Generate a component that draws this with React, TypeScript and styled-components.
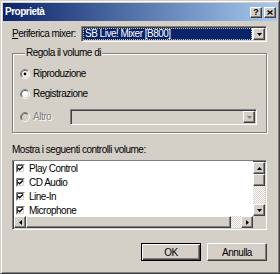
import React from 'react';
import styled, { createGlobalStyle, css } from 'styled-components';

const GlobalStyle = createGlobalStyle`
  html, body {
    margin: 0;
    padding: 0;
    background: #d4d0c8;
  }
  body {
    font-family: "Liberation Sans", Arial, sans-serif;
    font-size: 10px;
    letter-spacing: -0.5px;
    color: #000;
  }
`;

const raised = css`
  border: 1px solid;
  border-color: #fff #404040 #404040 #fff;
  box-shadow: inset -1px -1px #808080, inset 1px 1px #d4d0c8;
`;

const sunken = css`
  border: 1px solid;
  border-color: #808080 #fff #fff #808080;
  box-shadow: inset 1px 1px #404040, inset -1px -1px #d4d0c8;
`;

const dither = css`
  background: repeating-conic-gradient(#d4d0c8 0 25%, #fff 0 50%) 0 0 / 2px 2px;
`;

const Window = styled.div`
  width: 280px;
  height: 274px;
  box-sizing: border-box;
  border: 1px solid;
  border-color: #d4d0c8 #404040 #404040 #d4d0c8;
  box-shadow: inset 1px 1px #fff, inset -1px -1px #808080;
  padding: 2px;
  display: flex;
  flex-direction: column;
  background: #d4d0c8;
`;

const TitleBar = styled.div`
  height: 18px;
  display: flex;
  align-items: center;
  padding: 0 1px 0 2px;
  gap: 2px;
  background: linear-gradient(to right, #0a246a, #a6caf0);
`;

const Title = styled.span`
  flex: 1;
  color: #fff;
  font-weight: bold;
  line-height: 18px;
`;

const TitleButton = styled.div`
  width: 12px;
  height: 11px;
  box-sizing: border-box;
  ${raised}
  background: #d4d0c8;
  display: flex;
  align-items: center;
  justify-content: center;
  font-weight: bold;
  font-size: 9px;
  line-height: 9px;
  letter-spacing: 0;
`;

const Body = styled.div`
  flex: 1;
  display: flex;
  flex-direction: column;
  padding: 5px 10px 9px 9px;
`;

const MixerRow = styled.div`
  display: flex;
  align-items: center;
  height: 16px;
`;

const Label = styled.span<{ $disabled?: boolean }>`
  line-height: 12px;
  white-space: nowrap;
  ${(p) =>
    p.$disabled &&
    css`
      color: #808080;
      text-shadow: 1px 1px #fff;
    `}
`;

const Combo = styled.div<{ $disabled?: boolean }>`
  width: ${(p) => (p.$disabled ? 187 : 186)}px;
  height: 16px;
  margin-left: auto;
  box-sizing: border-box;
  ${sunken}
  padding: 1px;
  display: flex;
  background: ${(p) => (p.$disabled ? '#d4d0c8' : '#fff')};
`;

const ComboValue = styled.div`
  flex: 1;
  margin-right: 1px;
  box-sizing: border-box;
  background: #0a246a;
  color: #fff;
  border: 1px dotted #c8c4bc;
  padding-left: 1px;
  line-height: 10px;
  white-space: nowrap;
`;

const ComboSpacer = styled.div`
  flex: 1;
`;

const SmallButton = styled.div`
  width: 12px;
  height: 12px;
  box-sizing: border-box;
  ${raised}
  background: #d4d0c8;
  display: flex;
  align-items: center;
  justify-content: center;
  flex-shrink: 0;
`;

const Group = styled.fieldset`
  margin: 5px 0 0;
  padding: 8px 9px 7px 7px;
  min-width: 0;
  border: 1px solid #808080;
  box-shadow: inset 1px 1px #fff, 1px 1px #fff;
`;

const Legend = styled.legend`
  margin-left: 5px;
  padding: 0 1px;
  line-height: 12px;
  background: #d4d0c8;
`;

const RadioList = styled.div`
  display: flex;
  flex-direction: column;
  gap: 6px;
`;

const RadioRow = styled.div`
  display: flex;
  align-items: center;
  gap: 3px;
  min-height: 14px;
  &:last-child {
    margin-top: 2px;
  }
`;

const RadioSvg = styled.svg`
  width: 10px;
  height: 10px;
  flex-shrink: 0;
`;

const Caption = styled.div`
  margin-top: 11px;
  line-height: 12px;
`;

const ListBox = styled.div`
  margin-top: 4px;
  height: 70px;
  box-sizing: border-box;
  ${sunken}
  padding: 1px;
  display: grid;
  grid-template-columns: 1fr 12px;
  grid-template-rows: 1fr 12px;
  background: #fff;
`;

const Items = styled.div`
  overflow: hidden;
  background: #fff;
  margin-top: -1px;
`;

const Item = styled.div`
  height: 14px;
  display: flex;
  align-items: center;
  padding-left: 2px;
  gap: 4px;
  white-space: nowrap;
`;

const VScroll = styled.div`
  display: flex;
  flex-direction: column;
`;

const HScroll = styled.div`
  display: flex;
`;

const Thumb = styled.div<{ $flex?: boolean }>`
  ${raised}
  box-sizing: border-box;
  background: #d4d0c8;
  ${(p) => (p.$flex ? 'flex: 1;' : 'height: 12px; flex-shrink: 0;')}
`;

const Track = styled.div<{ $size?: number }>`
  ${dither}
  ${(p) => (p.$size ? `width: ${p.$size}px; flex-shrink: 0;` : 'flex: 1;')}
`;

const Corner = styled.div`
  background: #d4d0c8;
`;

const ButtonRow = styled.div`
  margin-top: 13px;
  display: flex;
  justify-content: flex-end;
  gap: 6px;
`;

const PushButton = styled.div<{ $default?: boolean }>`
  width: 60px;
  height: 18px;
  box-sizing: border-box;
  background: #d4d0c8;
  display: flex;
  align-items: center;
  justify-content: center;
  ${(p) =>
    p.$default
      ? css`
          border: 1px solid #000;
          box-shadow: inset 1px 1px #fff, inset -1px -1px #404040, inset -2px -2px #808080;
        `
      : raised}
`;

function Arrow({ dir, color = '#000' }: { dir: 'up' | 'down' | 'left' | 'right'; color?: string }) {
  const points = {
    up: '0,3 2.5,0 5,3',
    down: '0,0 5,0 2.5,3',
    left: '3,0 3,5 0,2.5',
    right: '0,0 0,5 3,2.5',
  }[dir];
  const vertical = dir === 'up' || dir === 'down';
  return (
    <svg width={vertical ? 5 : 3} height={vertical ? 3 : 5} viewBox={vertical ? '0 0 5 3' : '0 0 3 5'}>
      <polygon points={points} fill={color} />
    </svg>
  );
}

function Radio({ checked, disabled }: { checked?: boolean; disabled?: boolean }) {
  return (
    <RadioSvg viewBox="0 0 12 12">
      <circle cx="6" cy="6" r="4.5" fill={disabled ? '#d4d0c8' : '#fff'} />
      <path d="M2.11 9.89A5.5 5.5 0 0 1 9.89 2.11" stroke="#808080" fill="none" />
      <path d="M9.89 2.11A5.5 5.5 0 0 1 2.11 9.89" stroke="#fff" fill="none" />
      <path d="M2.82 9.18A4.5 4.5 0 0 1 9.18 2.82" stroke="#404040" fill="none" />
      <path d="M9.18 2.82A4.5 4.5 0 0 1 2.82 9.18" stroke="#d4d0c8" fill="none" />
      {checked && <circle cx="6" cy="6" r="1.7" fill="#000" />}
    </RadioSvg>
  );
}

function Check() {
  return (
    <svg width="9" height="9" viewBox="0 0 9 9" style={{ flexShrink: 0 }}>
      <rect x="0" y="0" width="9" height="9" fill="#fff" />
      <path d="M0.5 8.5V0.5H8.5" stroke="#808080" fill="none" />
      <path d="M1.5 7.5V1.5H7.5" stroke="#404040" fill="none" />
      <path d="M1.5 7.5H7.5V1.5" stroke="#d4d0c8" fill="none" />
      <polyline points="2.2,4.2 3.7,5.8 6.9,2.6" stroke="#000" strokeWidth="1.4" fill="none" />
    </svg>
  );
}

const controls = ['Play Control', 'CD Audio', 'Line-In', 'Microphone'];

export default function App() {
  return (
    <>
      <GlobalStyle />
      <Window>
        <TitleBar>
          <Title>Proprietà</Title>
          <TitleButton>?</TitleButton>
          <TitleButton>
            <svg width="6" height="5" viewBox="0 0 6 5">
              <path d="M0.5 0.5L5.5 4.5M5.5 0.5L0.5 4.5" stroke="#000" strokeWidth="1.3" />
            </svg>
          </TitleButton>
        </TitleBar>
        <Body>
          <MixerRow>
            <Label>
              <u>P</u>eriferica mixer:
            </Label>
            <Combo>
              <ComboValue>SB Live! Mixer [B800]</ComboValue>
              <SmallButton>
                <Arrow dir="down" />
              </SmallButton>
            </Combo>
          </MixerRow>

          <Group>
            <Legend>Regola il volume di</Legend>
            <RadioList>
              <RadioRow>
                <Radio checked />
                <Label>Riproduzione</Label>
              </RadioRow>
              <RadioRow>
                <Radio />
                <Label>Registrazione</Label>
              </RadioRow>
              <RadioRow>
                <Radio disabled />
                <Label $disabled>Altro</Label>
                <Combo $disabled>
                  <ComboSpacer />
                  <SmallButton>
                    <Arrow dir="down" color="#808080" />
                  </SmallButton>
                </Combo>
              </RadioRow>
            </RadioList>
          </Group>

          <Caption>Mostra i seguenti controlli volume:</Caption>
          <ListBox>
            <Items>
              {controls.map((name) => (
                <Item key={name}>
                  <Check />
                  <span>{name}</span>
                </Item>
              ))}
            </Items>
            <VScroll>
              <SmallButton>
                <Arrow dir="up" />
              </SmallButton>
              <Thumb />
              <Track />
              <SmallButton>
                <Arrow dir="down" />
              </SmallButton>
            </VScroll>
            <HScroll>
              <SmallButton>
                <Arrow dir="left" />
              </SmallButton>
              <Thumb $flex />
              <Track $size={10} />
              <SmallButton>
                <Arrow dir="right" />
              </SmallButton>
            </HScroll>
            <Corner />
          </ListBox>

          <ButtonRow>
            <PushButton $default>OK</PushButton>
            <PushButton>Annulla</PushButton>
          </ButtonRow>
        </Body>
      </Window>
    </>
  );
}
